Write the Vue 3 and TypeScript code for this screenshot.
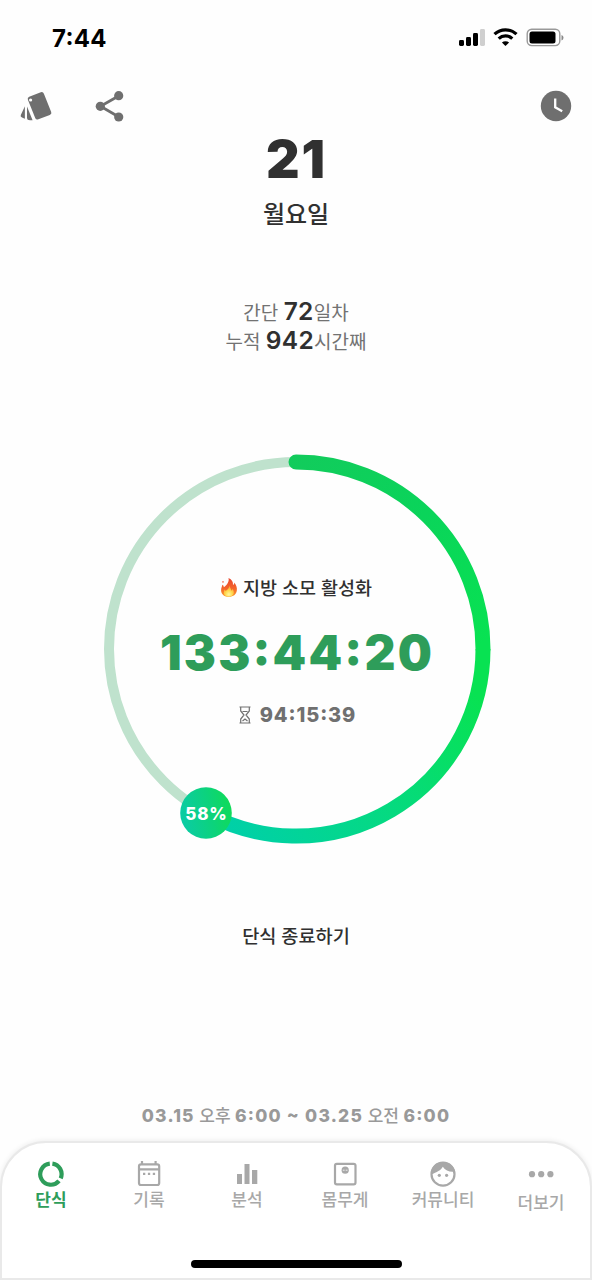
<script setup lang="ts">
interface Tab {
  id: string
  label: string
}

const tabs: Tab[] = [
  { id: 'fast', label: '단식' },
  { id: 'log', label: '기록' },
  { id: 'stats', label: '분석' },
  { id: 'weight', label: '몸무게' },
  { id: 'community', label: '커뮤니티' },
  { id: 'more', label: '더보기' },
]
const activeTab = 'fast'
</script>

<template>
  <div class="screen">
    <header class="status">
      <span class="clock">7:44</span>
      <svg class="signals" width="108" height="24" viewBox="0 0 108 24">
        <rect x="1" y="14" width="5" height="6" rx="1.4" />
        <rect x="8" y="11" width="5" height="9" rx="1.4" />
        <rect x="15" y="7" width="5" height="13" rx="1.4" />
        <rect x="22" y="3" width="5" height="17" rx="1.4" fill="#cfcfcf" />
        <g fill="none" stroke="#000" stroke-width="3.2">
          <path d="M36.5 8.2a16 16 0 0 1 22 0" />
          <path d="M40.7 12.6a10 10 0 0 1 13.600 0" />
        </g>
        <path d="M43.900 16.600a5.300 5.300 0 0 1 7.200 0L47.500 20z" />
        <rect x="69.200" y="3.200" width="32.600" height="16.400" rx="4.500" fill="none" stroke="#999" stroke-width="1.400" />
        <rect x="71.500" y="5.500" width="26" height="12" rx="2.500" />
        <path d="M103.500 9v5.500q2-.8 2-2.750t-2-2.750z" fill="#888" />
      </svg>
    </header>

    <nav class="actions">
      <svg width="34" height="34" viewBox="0 0 34 34" fill="#6f6f6f">
        <path d="M9.200 7.700 20.800 3.300q2.200-.8 3.100 1.400l7.300 18.300q.8 2.200-1.400 3.100L18.400 30.300q-2.300.9-3.200-1.400L7.900 10.700q-.8-2.200 1.300-3z" />
        <circle cx="10.600" cy="11" r="1.600" fill="#fff" />
        <path d="M7 17.500 12.600 31.200H10q-3 0-3-2.500z" />
        <path d="M4.900 17.200v12.600l-2.900-1.200q-1.900-.9-1.200-2.700z" />
      </svg>
      <svg class="share" width="32" height="34" viewBox="0 0 32 34">
        <path d="M25 7.700 6.500 18.300 25 29" fill="none" stroke="#6f6f6f" stroke-width="2.800" />
        <g fill="#6f6f6f"><circle cx="24.700" cy="7.700" r="4.600" /><circle cx="6.300" cy="18.300" r="4.600" /><circle cx="24.700" cy="29" r="4.600" /></g>
      </svg>
      <svg class="history" width="32" height="32" viewBox="0 0 32 32">
        <circle cx="16" cy="16" r="15.200" fill="#6f6f6f" />
        <path d="M15.200 8.500v8.800l7 4" fill="none" stroke="#fff" stroke-width="2.300" />
      </svg>
    </nav>

    <section class="date">
      <h1>21</h1>
      <p>월요일</p>
    </section>

    <section class="totals">
      <p>간단 <b>72</b>일차</p>
      <p>누적 <b>942</b>시간째</p>
    </section>

    <section class="dial">
      <svg class="ring" width="400" height="400" viewBox="0 0 400 400">
        <defs>
          <linearGradient id="sweep" gradientUnits="userSpaceOnUse" x1="110" y1="350" x2="330" y2="180">
            <stop offset="0" stop-color="#00d0a8" />
            <stop offset=".5" stop-color="#05da80" />
            <stop offset="1" stop-color="#08e252" />
          </linearGradient>
          <linearGradient id="rise" gradientUnits="userSpaceOnUse" x1="200" y1="0" x2="380" y2="200">
            <stop offset="0" stop-color="#12cb5c" />
            <stop offset=".5" stop-color="#0ad45a" />
            <stop offset="1" stop-color="#08e252" />
          </linearGradient>
          <linearGradient id="badge" x1="0" y1=".6" x2="1" y2=".4">
            <stop offset="0" stop-color="#0bcba6" />
            <stop offset=".6" stop-color="#0cd37b" />
            <stop offset="1" stop-color="#10db58" />
          </linearGradient>
        </defs>
        <circle cx="200" cy="200" r="187" fill="none" stroke="#bfe2cd" stroke-width="10" />
        <path d="M387 200A187 187 0 0 1 110 364" fill="none" stroke="url(#sweep)" stroke-width="15" />
        <path d="M200 13A187 187 0 0 1 387 200" fill="none" stroke="url(#rise)" stroke-width="15" stroke-linecap="round" />
        <circle cx="110" cy="364" r="25.800" fill="url(#badge)" />
      </svg>
      <span class="percent">58%</span>
      <div class="readout">
        <div class="stage">
          <svg width="18" height="21" viewBox="0 0 18 21">
            <defs>
              <linearGradient id="flame" x1="0" y1="0" x2="0" y2="1">
                <stop offset="0" stop-color="#e8452f" />
                <stop offset=".55" stop-color="#f4652b" />
                <stop offset="1" stop-color="#fb9a28" />
              </linearGradient>
              <radialGradient id="ember" cx=".5" cy=".8" r=".7">
                <stop offset="0" stop-color="#fff6a0" />
                <stop offset=".5" stop-color="#ffd84d" />
                <stop offset="1" stop-color="#fda436" />
              </radialGradient>
            </defs>
            <path d="M8.500 1c3.500 1.500 4.700 4 4.500 7 1-.4 1.300-1.300 1.300-2.400 2 2.500 3 5.300 2.500 8.200-.6 3.700-3.500 6-7.700 6-4.600 0-7.800-2.500-8-6.400C1 11 2 9.500 2.400 7.700c1 .5 1.400 1.500 1.400 2.600C6.800 8 9.500 5 8.500 1z" fill="url(#flame)" />
            <path d="M9.500 8.500c.4 2.500 1.700 3.300 1.800 5.200.8-.4 1.100-1 1.200-1.900 1.600 2.200 1.800 4.400.6 6-1 1.400-2.500 1.800-4.300 1.800-3 0-5.100-1.600-5-4.200 0-1.200.5-2.200.9-3 .4.500.7 1 .8 1.700C7.600 12.800 9.300 11 9.500 8.500z" fill="url(#ember)" />
            <circle cx="3" cy="4.900" r=".8" fill="#f26a4e" />
          </svg>
          <span>지방 소모 활성화</span>
        </div>
        <div class="elapsed">133:44:20</div>
        <div class="remaining">
          <svg width="12" height="18" viewBox="0 0 12 18" fill="none" stroke="#707070" stroke-width="1.200">
            <path d="M.5 1h11M.5 17h11M1.700 1v4L5 9l-3.300 4v4M10.300 1v4L7 9l3.300 4v4M3.500 5.500h5M3.500 15l2.500-2 2.500 2" />
          </svg>
          <span>94:15:39</span>
        </div>
      </div>
    </section>

    <button class="finish">단식 종료하기</button>

    <p class="range"><b>03.15</b> 오후 <b>6:00 ~ 03.25</b> 오전 <b>6:00</b></p>

    <footer class="tabbar">
      <div class="tabs">
        <div v-for="tab in tabs" :key="tab.id" class="tab" :class="[tab.id, { active: tab.id === activeTab }]">
          <svg width="28" height="28" viewBox="0 0 28 28" fill="currentColor">
            <g v-if="tab.id === 'fast'" fill="none" stroke="currentColor" stroke-width="4.200">
              <path d="M15.400 3.600a10.600 10.600 0 0 1 8.300 14.700" />
              <path d="M22 20.900A10.600 10.600 0 1 1 12.800 3.600" />
            </g>
            <g v-else-if="tab.id === 'log'">
              <path d="M7 1v4M20.600 1v4M3.500 9.300h21" fill="none" stroke="currentColor" stroke-width="2.200" />
              <rect x="4" y="4.300" width="20.200" height="20.700" rx="2" fill="none" stroke="currentColor" stroke-width="2.200" />
              <path d="M8 12.700h2.300V15H8zM12.900 12.700h2.300V15h-2.300zM17.800 12.700h2.300V15h-2.300z" />
            </g>
            <path v-else-if="tab.id === 'stats'" d="M4 14h5v10H4zM11.500 4h5v20h-5zM19 10h5.300v14H19z" />
            <g v-else-if="tab.id === 'weight'">
              <rect x="4" y="3.800" width="20.500" height="20.600" rx="1.800" fill="none" stroke="currentColor" stroke-width="2.200" />
              <circle cx="14.200" cy="10.200" r="3.600" />
              <path d="M11.800 10.200h1.800M14.700 10.200h1.800" stroke="#fff" stroke-width=".8" />
            </g>
            <g v-else-if="tab.id === 'community'">
              <circle cx="14" cy="14.200" r="11.500" fill="none" stroke="currentColor" stroke-width="2.200" />
              <path d="M2 12.500C2.800 6 8 2 14 2s11 4 12 9.500c-5 .8-9.500-.8-12.200-4.800C11.800 10.300 8 12 2 14.500z" />
              <circle cx="10.300" cy="15.300" r="1.600" /><circle cx="17.600" cy="15.300" r="1.600" />
            </g>
            <g v-else><circle cx="5" cy="14.200" r="3.100" /><circle cx="14.200" cy="14.200" r="3.100" /><circle cx="23.400" cy="14.200" r="3.100" /></g>
          </svg>
          <span>{{ tab.label }}</span>
        </div>
      </div>
      <div class="home"></div>
    </footer>
  </div>
</template>

<style>
body { background: #fefefe; }
</style>

<style scoped>
* { box-sizing: border-box; margin: 0; padding: 0; }
svg { display: block; flex: none; }
.screen {
  display: flex;
  flex-direction: column;
  width: 592px;
  height: 1280px;
  overflow: hidden;
  background: #fefefe;
  color: #303030;
  font-family: Inter, "Noto Sans CJK KR", sans-serif;
  white-space: nowrap;
}
.status {
  display: flex;
  justify-content: space-between;
  height: 76px;
  padding: 26px 26px 0 52px;
}
.clock { font-size: 24px; font-weight: 700; line-height: 25px; color: #000; letter-spacing: .300px; font-feature-settings: "case" 1; }
.actions { display: flex; height: 48px; padding: 12px 20px 0 20px; }
.actions > svg:first-child { margin-top: 1px; }
.share { margin-left: 40px; }
.history { margin: 2px 0 0 auto; }
.date { height: 174px; padding-top: 8px; text-align: center; }
.date h1 { height: 54px; padding-left: 1px; font-size: 52px; font-weight: 900; line-height: 55px; letter-spacing: 2px; }
.date p { height: 36px; margin-top: 11px; font-size: 24px; font-weight: 500; line-height: 36px; }
.totals { height: 151px; text-align: center; }
.totals p { height: 30px; font-size: 19px; font-weight: 400; line-height: 28px; color: #727272; }
.totals p + p { line-height: 27px; }
.totals p { transform: translateY(-1px); }
.totals b { font-size: 24.500px; font-weight: 600; color: #303030; letter-spacing: .3px; }
.dial { position: relative; align-self: center; width: 400px; height: 400px; }
.ring { position: absolute; inset: 0; }
.percent {
  position: absolute;
  left: 84px;
  top: 354px;
  width: 53px;
  text-align: center;
  font-size: 17px;
  font-weight: 800;
  line-height: 22px;
  letter-spacing: .8px;
  color: #fff;
}
.readout { position: relative; display: flex; flex-direction: column; align-items: center; padding-top: 123px; }
.stage { display: flex; align-items: center; gap: 5px; height: 30px; font-size: 18.500px; font-weight: 500; }
.elapsed { height: 60px; margin-top: 21px; padding-left: 2px; font-size: 48px; font-weight: 900; line-height: 60px; color: #2e9d5a; letter-spacing: 2.200px; font-feature-settings: "case" 1; }
.remaining { display: flex; align-items: center; gap: 9px; height: 30px; margin-top: 17px; padding-left: 3px; font-size: 20px; font-weight: 800; color: #707070; letter-spacing: .9px; font-feature-settings: "case" 1; }
.finish { height: 30px; margin-top: 72px; border: 0; background: none; color: #303030; font: 500 18.600px/30px Inter, "Noto Sans CJK KR", sans-serif; }
.range { height: 30px; margin-top: 150px; text-align: center; font-size: 17px; font-weight: 500; line-height: 30px; color: #999; }
.range b { font-weight: 800; font-size: 17.500px; letter-spacing: 1.200px; font-feature-settings: "case" 1; }
.tabbar {
  display: flex;
  flex-direction: column;
  align-items: center;
  height: 139px;
  margin-top: 10px;
  border: 2px solid #e9e9e9;
  border-radius: 46px 46px 0 0;
  background: #fff;
  box-shadow: 0 -1px 5px #0001;
}
.tabs { display: flex; width: 588px; height: 117px; padding-top: 17px; }
.tab { display: flex; flex-direction: column; align-items: center; width: 98px; color: #a8a8a8; font-size: 17px; font-weight: 500; line-height: 24px; }
.tab.active { color: #2e9d5a; font-weight: 700; }
.tab.more span { margin-top: 3px; }
.home { width: 211px; height: 8px; border-radius: 4px; background: #000; }
</style>
